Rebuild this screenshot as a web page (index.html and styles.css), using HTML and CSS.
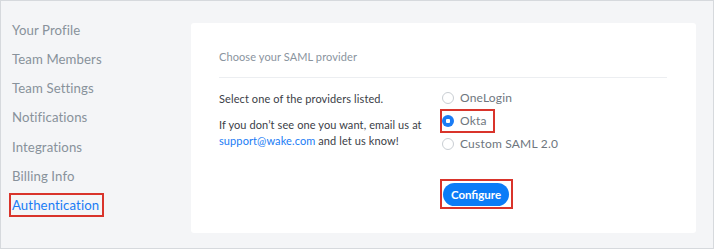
FILE: index.html
```html
<!DOCTYPE html>
<html>
<head>
<meta charset="utf-8">
<link rel="stylesheet" href="styles.css">
</head>
<body>
<div class="frame">
  <nav class="sidebar">
    <div class="nav-item">Your Profile</div>
    <div class="nav-item">Team Members</div>
    <div class="nav-item">Team Settings</div>
    <div class="nav-item">Notifications</div>
    <div class="nav-item">Integrations</div>
    <div class="nav-item">Billing Info</div>
    <div class="nav-item"><span class="active hl">Authentication</span></div>
  </nav>
  <main class="card">
    <div class="card-title">Choose your SAML provider</div>
    <div class="divider"></div>
    <div class="content">
      <div class="info">
        <p class="line">Select one of the providers listed.</p>
        <p class="para">If you don’t see one you want, email us at<br><a class="link">support@wake.com</a> and let us know!</p>
      </div>
      <div class="options">
        <div class="option"><span class="radio"></span><span class="label">OneLogin</span></div>
        <div class="option"><span class="hl-opt"><span class="radio checked"></span><span class="label">Okta</span></span></div>
        <div class="option"><span class="radio"></span><span class="label">Custom SAML 2.0</span></div>
        <div class="btn-wrap"><button class="btn">Configure</button></div>
      </div>
    </div>
  </main>
</div>
</body>
</html>
```

FILE: styles.css
```css
* { box-sizing: border-box; }
html, body { margin: 0; padding: 0; }
body { font-family: Lato, "Open Sans", sans-serif; }
.frame {
  width: 714px;
  height: 249px;
  border: 1px solid #d6d9dd;
  background: #f4f5f7;
  display: flex;
  overflow: hidden;
}
.sidebar {
  width: 190px;
  padding-top: 14.5px;
}
.nav-item {
  height: 29.33px;
  line-height: 29.33px;
  padding-left: 11px;
  font-size: 13.2px;
  letter-spacing: 0.1px;
  color: #88929b;
}
.hl {
  display: inline-block;
  border: 2px solid #d9342b;
  line-height: 20px;
  padding: 0 3px 0 1px;
  margin-left: -3px;
}
.active { color: #1a7cf5; }
.card {
  margin-top: 22px;
  width: 505px;
  height: 210px;
  background: #fff;
  border-radius: 3px;
  padding: 26px 29px 0 28px;
}
.card-title {
  font-size: 11px;
  line-height: 16px;
  color: #8a949e;
  letter-spacing: 0.1px;
}
.divider {
  height: 1px;
  background: #eceef1;
  margin-top: 12px;
}
.content {
  display: flex;
  margin-top: 8px;
}
.info {
  width: 223px;
  padding-top: 5px;
  font-size: 11px;
  line-height: 16px;
  color: #3b4047;
  letter-spacing: 0.1px;
}
.info p { margin: 0; }
.para { margin-top: 10px !important; }
.link { color: #1a7cf5; }
.options {
  display: flex;
  flex-direction: column;
}
.option {
  height: 23px;
  display: flex;
  align-items: center;
}
.hl-opt {
  display: inline-flex;
  align-items: center;
  border: 2px solid #d9342b;
  height: 24px;
  padding: 0 6px 0 0;
  margin-left: -2px;
}
.radio {
  width: 12px;
  height: 12px;
  border-radius: 50%;
  border: 1px solid #c9ced3;
  background: #fff;
  flex: none;
}
.radio.checked {
  border: none;
  background: radial-gradient(circle, #fff 0 2px, #1a7cf5 2.5px);
}
.label {
  margin-left: 6px;
  font-size: 12px;
  color: #6e767e;
  letter-spacing: 0.2px;
}
.btn-wrap {
  align-self: flex-start;
  margin-top: 24px;
  margin-left: -2px;
  border: 2px solid #d9342b;
  padding: 2px 2px 1px 1px;
}
.btn {
  display: block;
  width: 66px;
  height: 23px;
  border: none;
  border-radius: 12px;
  background: #0b7cf7;
  color: #fff;
  font-family: Lato, sans-serif;
  font-weight: 700;
  font-size: 11.5px;
  padding: 0;
}
```
